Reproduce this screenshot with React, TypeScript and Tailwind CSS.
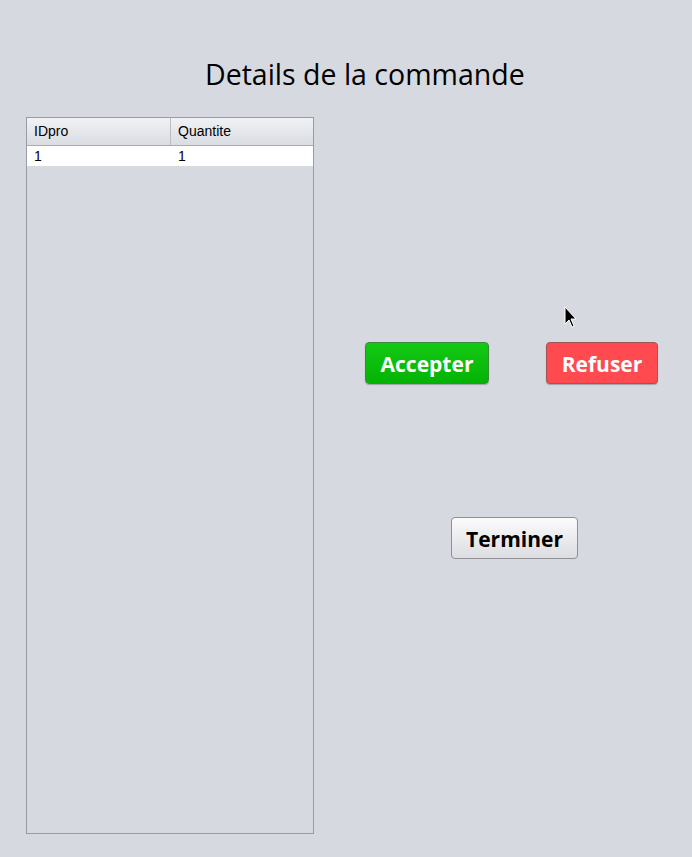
export default function App() {
  return (
    <div
      className="relative h-[857px] w-full overflow-hidden bg-[#d6d9e0]"
      style={{ fontFamily: '"Open Sans", "Noto Sans", sans-serif' }}
    >
      <div className="pt-[54px] pl-[205px]">
        <h1 className="text-[28.5px] leading-[40px] text-black">Details de la commande</h1>
      </div>

      <div className="mt-[23px] flex pl-[26px]">
        <div className="flex h-[717px] w-[288px] flex-col border border-[#9a9ca3] bg-[#d6d9e0]">
          <div
            className="flex h-[28px] border-b border-[#a9abb2] bg-gradient-to-b from-[#f1f2f5] to-[#d9dce2] text-[14px] text-black"
            style={{ fontFamily: '"Liberation Sans", Arial, sans-serif' }}
          >
            <div className="flex w-[144px] items-center border-r border-[#b9bcc3] pl-[7px]">IDpro</div>
            <div className="flex flex-1 items-center pl-[7px]">Quantite</div>
          </div>
          <div
            className="flex h-[20px] bg-white text-[14px] text-black"
            style={{ fontFamily: '"Liberation Sans", Arial, sans-serif' }}
          >
            <div className="flex w-[144px] items-center pl-[7px]">1</div>
            <div className="flex flex-1 items-center pl-[7px]">1</div>
          </div>
        </div>

        <div className="flex flex-col pt-[225px]">
          <div className="flex gap-[57px] pl-[51px]">
            <button className="h-[42px] w-[124px] rounded-[4px] border border-[#3a8a3a] bg-gradient-to-b from-[#14c914] to-[#04b304] pt-[3px] text-[21px] font-bold text-white shadow-[0_1px_1px_rgba(0,0,0,0.25)]">
              Accepter
            </button>
            <button className="h-[42px] w-[112px] rounded-[4px] border border-[#9e5556] bg-[#ff4a4f] pt-[3px] text-[21px] font-bold text-white shadow-[0_1px_1px_rgba(0,0,0,0.25)]">
              Refuser
            </button>
          </div>
          <div className="mt-[133px] pl-[137px]">
            <button className="h-[42px] w-[127px] rounded-[4px] border border-[#8e9096] bg-gradient-to-b from-[#fbfbfc] to-[#dcdde1] pt-[3px] text-[21px] font-bold text-black">
              Terminer
            </button>
          </div>
        </div>
      </div>

      <svg className="absolute left-[564px] top-[306px]" width="14" height="24" viewBox="0 0 14 24">
        <path d="M1 1 L1 18 L5 14 L8 21 L10 20 L7 13 L12 13 Z" fill="black" stroke="white" strokeWidth="1" />
      </svg>
    </div>
  );
}
